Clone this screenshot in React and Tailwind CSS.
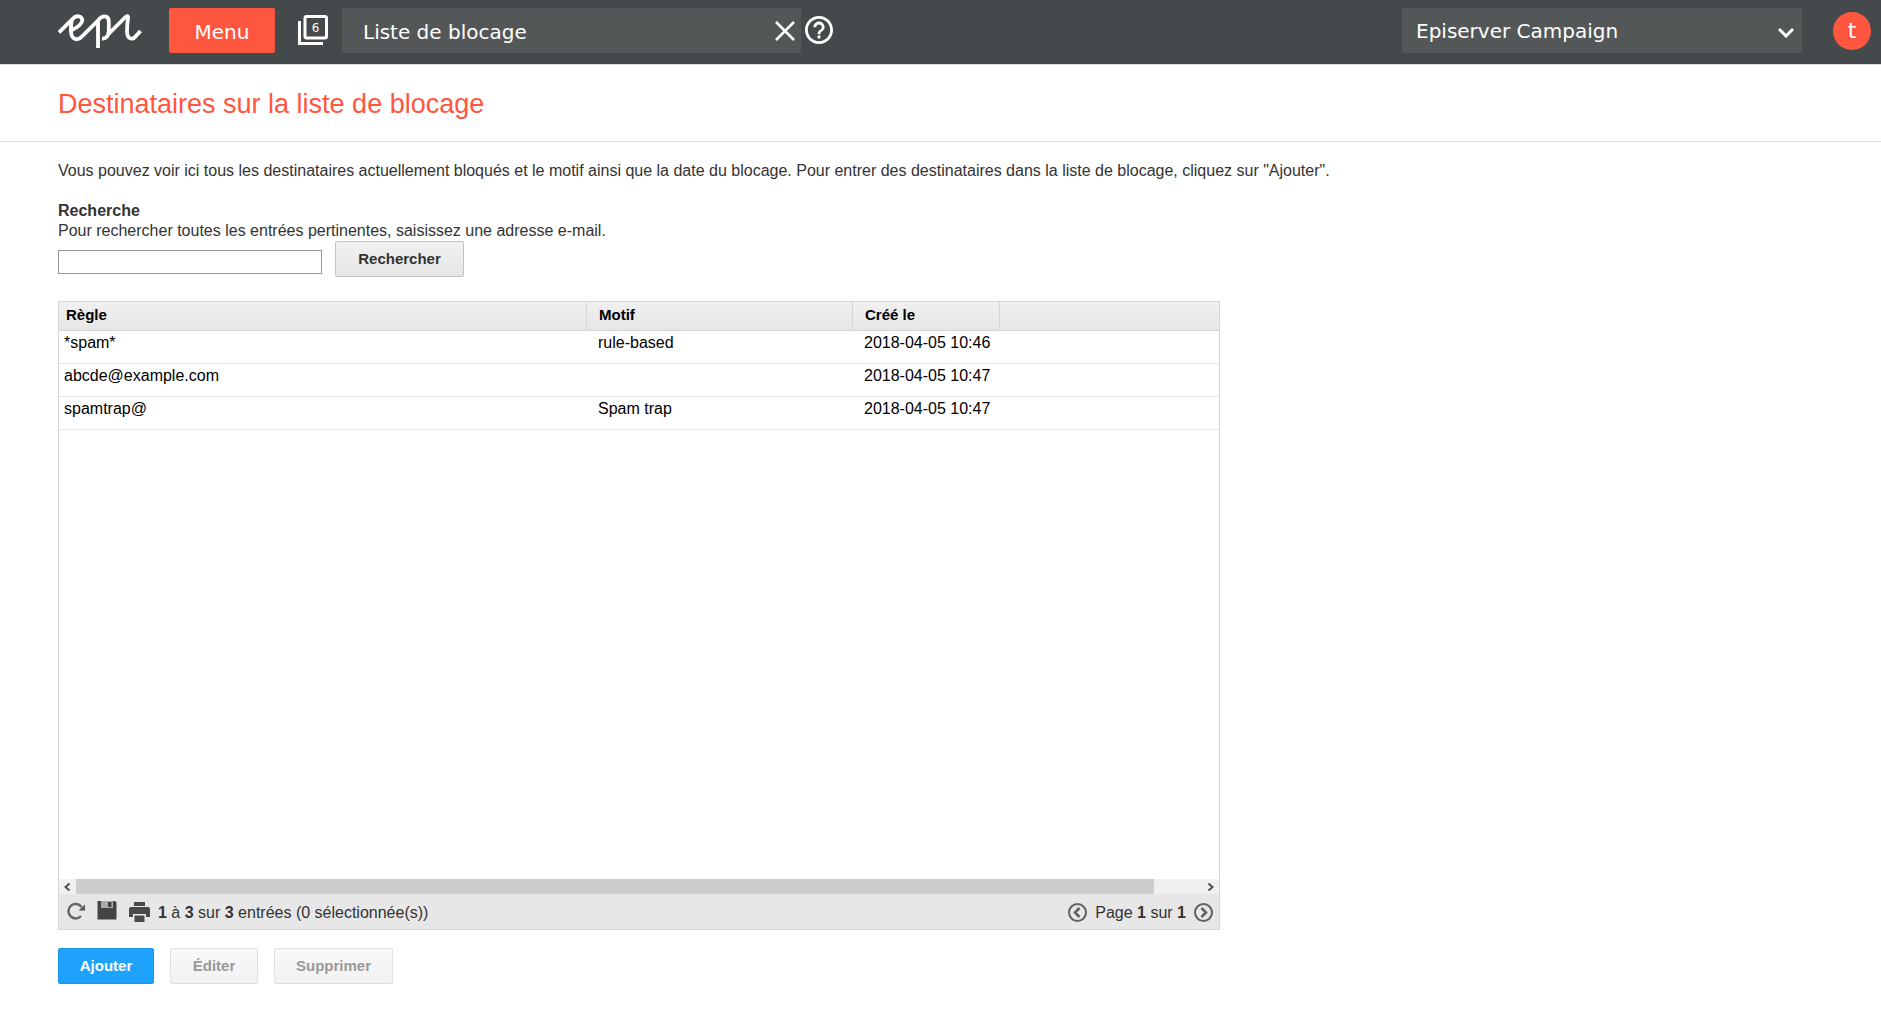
import { useState } from "react";

const entries = [
  { rule: "*spam*", reason: "rule-based", created: "2018-04-05 10:46" },
  { rule: "abcde@example.com", reason: "", created: "2018-04-05 10:47" },
  { rule: "spamtrap@", reason: "Spam trap", created: "2018-04-05 10:47" },
];

function Logo() {
  return (
    <svg
      className="w-[84px] h-9 shrink-0"
      viewBox="0 0 84 36"
      fill="none"
      stroke="#fff"
      strokeWidth="3.8"
      role="img"
      aria-label="epi"
    >
      <path d="M1 19.5 L14.5 6 C19 1 25.500 3.500 24 8.500 C22.500 13 18 15 14 17" />
      <path d="M14.500 6 C13 9 12.800 14 13 19 C13.500 27 20 28 24 23.500 L40 7.500 C44 2 50.500 2 50.800 8 V18 C50.800 23 48 26 44 25.500" />
      <path d="M40 7 V35" />
      <path d="M49.500 22 L67 4.500 C69 2.500 70.300 2.500 70 5 C69.500 9 69 14 69 19 C69.500 27 75 27 78 23 L82.500 18" />
    </svg>
  );
}

function TopBar() {
  return (
    <header className="flex items-start h-16 pt-2 pl-[58px] pr-2.5 bg-[#44494b] font-['DejaVu_Sans',Verdana,sans-serif] text-xl text-white">
      <div className="h-[45px] flex items-center">
        <Logo />
      </div>
      <button className="ml-[27px] w-[106px] h-[45px] pt-0.5 shrink-0 rounded-xs bg-[#ff5640]">
        Menu
      </button>

      <button className="ml-[23px] mt-[7px] shrink-0" aria-label="6 onglets">
        <svg className="w-[30px] h-[30px]" viewBox="0 0 30 30" fill="none" stroke="#fff">
          <path d="M1.500 6 V28.500 H25" strokeWidth="3" />
          <rect x="7" y="1.500" width="21.500" height="21.500" rx="1.500" strokeWidth="3" />
          <text x="17.500" y="17" fontSize="12" textAnchor="middle" fill="#fff" stroke="none">
            6
          </text>
        </svg>
      </button>

      <div className="ml-3.5 w-[459px] h-[45px] flex items-center justify-between pl-[21px] pr-1.5 bg-[#535757]">
        <span className="pt-0.5">Liste de blocage</span>
        <button aria-label="Fermer">
          <svg className="w-5 h-5" viewBox="0 0 20 20" fill="none" stroke="#fff" strokeWidth="2.500">
            <path d="M1 1 L19 19 M19 1 L1 19" />
          </svg>
        </button>
      </div>

      <button className="ml-1 mt-2 shrink-0" aria-label="Aide">
        <svg className="w-7 h-7" viewBox="2 2 20 20" fill="#fff">
          <path d="M11 18h2v-2h-2v2zm1-16C6.480 2 2 6.480 2 12s4.480 10 10 10 10-4.480 10-10S17.520 2 12 2zm0 18c-4.410 0-8-3.590-8-8s3.590-8 8-8 8 3.590 8 8-3.590 8-8 8zm0-14c-2.210 0-4 1.790-4 4h2c0-1.100.9-2 2-2s2 .9 2 2c0 2-3 1.750-3 5h2c0-2.250 3-2.500 3-5 0-2.210-1.790-4-4-4z" />
        </svg>
      </button>

      <div className="relative ml-auto w-[400px] h-[45px] bg-[#535757]">
        <select
          aria-label="Produit"
          className="w-full h-full pl-3.5 pr-10 appearance-none bg-transparent"
        >
          <option>Episerver Campaign</option>
        </select>
        <svg
          className="absolute right-2 top-5 w-4 h-2.5 pointer-events-none"
          viewBox="0 0 16 10"
          fill="none"
          stroke="#fff"
          strokeWidth="3"
        >
          <path d="M1 1 L8 8 L15 1" />
        </svg>
      </div>

      <button className="ml-[31px] mt-1 w-[38px] h-[38px] shrink-0 rounded-full bg-[#ff5640] text-[22px] leading-8">
        t
      </button>
    </header>
  );
}

function SearchForm() {
  const [email, setEmail] = useState("");

  return (
    <form onSubmit={(e) => e.preventDefault()}>
      <label htmlFor="email" className="block">
        <strong className="block">Recherche</strong>
        Pour rechercher toutes les entrées pertinentes, saisissez une adresse e-mail.
      </label>
      <div className="flex items-end gap-[13px]">
        <input
          id="email"
          type="text"
          value={email}
          onChange={(e) => setEmail(e.target.value)}
          className="w-[264px] h-6 mb-[3px] px-1 border border-[#949494] bg-white"
        />
        <button className="w-[129px] h-9 rounded-xs border border-[#c4c4c4] bg-linear-to-b from-[#f1f1f1] to-[#e6e6e6] text-[15px] font-bold">
          Rechercher
        </button>
      </div>
    </form>
  );
}

function BlockTable() {
  return (
    <table className="w-full table-fixed border-separate border-spacing-0 text-black">
      <colgroup>
        <col className="w-[528px]" />
        <col className="w-[266px]" />
        <col className="w-[147px]" />
        <col />
      </colgroup>
      <thead>
        <tr className="h-[29px] bg-linear-to-b from-[#f0f0f0] to-[#e6e6e6] text-left text-[15px] leading-5 align-top">
          <th className="pt-[3px] pl-[7px] border-r border-b border-[#d6d6d6]">Règle</th>
          <th className="pt-[3px] pl-3 border-r border-b border-[#d6d6d6]">Motif</th>
          <th className="pt-[3px] pl-3 border-r border-b border-[#d6d6d6]">Créé le</th>
          <th className="border-b border-[#d6d6d6]"></th>
        </tr>
      </thead>
      <tbody>
        {entries.map((entry) => (
          <tr key={entry.rule} className="h-[33px] leading-5 align-top">
            <td className="pt-0.5 pl-[5px] border-b border-[#e8e8e8]">{entry.rule}</td>
            <td className="pt-0.5 pl-[11px] border-b border-[#e8e8e8]">{entry.reason}</td>
            <td className="pt-0.5 pl-[11px] border-b border-[#e8e8e8] whitespace-nowrap">
              {entry.created}
            </td>
            <td className="border-b border-[#e8e8e8]"></td>
          </tr>
        ))}
      </tbody>
    </table>
  );
}

function ScrollBar() {
  return (
    <div className="flex items-center h-[15px] bg-[#f0f0f0]">
      <button className="w-[17px] shrink-0 flex justify-center" aria-label="Défiler à gauche">
        <svg className="w-2 h-2" viewBox="0 0 8 8" fill="none" stroke="#505050" strokeWidth="2">
          <path d="M5.500 0.500 L1.500 4 L5.500 7.500" />
        </svg>
      </button>
      <div className="flex-1 h-full">
        <div className="w-[95.7%] h-full bg-[#cdcdcd]"></div>
      </div>
      <button className="w-[17px] shrink-0 flex justify-center" aria-label="Défiler à droite">
        <svg className="w-2 h-2" viewBox="0 0 8 8" fill="none" stroke="#505050" strokeWidth="2">
          <path d="M1.500 0.500 L5.500 4 L1.500 7.500" />
        </svg>
      </button>
    </div>
  );
}

function TableFooter() {
  return (
    <div className="flex items-center h-[35px] pl-2 pr-1.5 bg-[#e7e7e7]">
      <button className="mb-0.5" aria-label="Actualiser">
        <svg className="w-[18px] h-[18px]" viewBox="0 0 18 18" fill="none">
          <path d="M14 14 A7.200 7.200 0 1 1 14.500 5" stroke="#666" strokeWidth="2.500" />
          <path d="M18 2.500 V8.500 H11.500 Z" fill="#555" />
        </svg>
      </button>
      <button className="ml-3 mb-1" aria-label="Enregistrer">
        <svg className="w-5 h-5" viewBox="0 0 20 20" fill="#444">
          <path d="M1 1 H18 L19.500 2.500 V19.500 H0.500 V1.500 Z" />
          <path d="M4 1 H16 V8 H4 Z" fill="#aaa" />
          <path d="M11 2 H14.500 V7 H11 Z" />
        </svg>
      </button>
      <button className="ml-3" aria-label="Imprimer">
        <svg className="w-[21px] h-5" viewBox="0 0 21 20" fill="#4a4a4a">
          <path d="M5 0 H16 V4 H5 Z" />
          <path d="M2 5 H19 Q21 5 21 7 V15 H17 V12 H4 V15 H0 V7 Q0 5 2 5 Z" />
          <path d="M5.500 13.500 H15.500 V20 H5.500 Z" />
        </svg>
      </button>
      <p className="ml-2 pt-0.5">
        <b>1</b> à <b>3</b> sur <b>3</b> entrées (0 sélectionnée(s))
      </p>

      <div className="flex items-center gap-2 ml-auto pt-0.5">
        <button aria-label="Page précédente">
          <svg className="w-[19px] h-[19px]" viewBox="0 0 19 19" fill="none" stroke="#606060" strokeWidth="2">
            <circle cx="9.500" cy="9.500" r="8.500" />
            <path d="M11.500 5 L7 9.500 L11.500 14" strokeWidth="2.500" />
          </svg>
        </button>
        <span>
          Page <b>1</b> sur <b>1</b>
        </span>
        <button aria-label="Page suivante">
          <svg className="w-[19px] h-[19px]" viewBox="0 0 19 19" fill="none" stroke="#606060" strokeWidth="2">
            <circle cx="9.500" cy="9.500" r="8.500" />
            <path d="M7.500 5 L12 9.500 L7.500 14" strokeWidth="2.500" />
          </svg>
        </button>
      </div>
    </div>
  );
}

export default function App() {
  return (
    <div className="min-h-screen bg-white font-['Liberation_Sans',Arial,sans-serif] text-base leading-5 text-[#333]">
      <TopBar />

      <div className="h-[78px] pl-[58px] pt-0.5 flex items-center border-b border-t border-[#dcdcdc]">
        <h1 className="text-[27px] leading-8 text-[#ff5640]">
          Destinataires sur la liste de blocage
        </h1>
      </div>

      <main className="px-[58px] pt-[19px] pb-8">
        <p className="mb-5">
          Vous pouvez voir ici tous les destinataires actuellement bloqués et le motif ainsi que la
          date du blocage. Pour entrer des destinataires dans la liste de blocage, cliquez sur
          "Ajouter".
        </p>

        <SearchForm />

        {/* Block list */}
        <div className="mt-6 max-w-[1162px] border border-[#d6d6d6]">
          <div className="min-h-[577px]">
            <BlockTable />
          </div>
          <ScrollBar />
          <TableFooter />
        </div>

        {/* Actions */}
        <div className="flex gap-4 mt-[18px] text-[15px] font-bold">
          <button className="w-24 h-9 rounded-xs border border-[#1b95e8] bg-[#1ea2fc] text-white">
            Ajouter
          </button>
          <button
            disabled
            className="w-[88px] h-9 rounded-xs border border-[#e0e0e0] bg-linear-to-b from-[#f8f8f8] to-[#f2f2f2] text-[#999]"
          >
            Éditer
          </button>
          <button
            disabled
            className="w-[119px] h-9 rounded-xs border border-[#e0e0e0] bg-linear-to-b from-[#f8f8f8] to-[#f2f2f2] text-[#999]"
          >
            Supprimer
          </button>
        </div>
      </main>
    </div>
  );
}
